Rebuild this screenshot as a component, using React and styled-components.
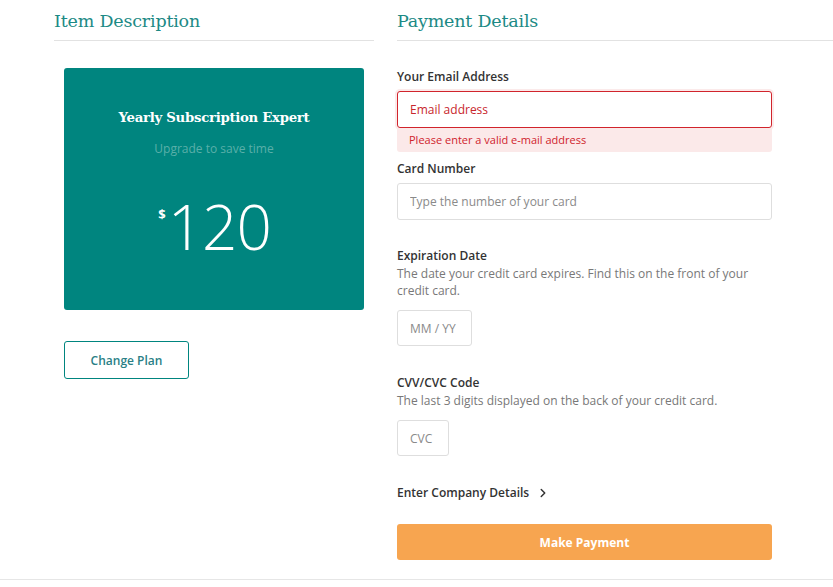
import React from 'react';
import styled, { createGlobalStyle } from 'styled-components';
import { ChevronRight } from 'lucide-react';

const GlobalStyle = createGlobalStyle`
  html, body {
    margin: 0;
    padding: 0;
    background: #fff;
  }
  * {
    box-sizing: border-box;
  }
  body {
    font-family: 'Open Sans', 'Liberation Sans', sans-serif;
    color: #333;
  }
`;

const TEAL = '#00857f';

const Page = styled.div`
  min-height: 580px;
  border-bottom: 1px solid #e6e6e6;
  padding: 0 0 0 54px;
  display: grid;
  grid-template-columns: 320px 1fr;
  column-gap: 23px;
  align-items: start;
`;

const Column = styled.section`
  display: flex;
  flex-direction: column;
`;

const SectionTitle = styled.h2`
  margin: 0;
  padding: 8px 0 7px;
  height: 41px;
  font-family: 'DejaVu Serif', 'Liberation Serif', serif;
  font-weight: normal;
  font-size: 17.5px;
  line-height: 26px;
  letter-spacing: -0.2px;
  color: #1c8a85;
  border-bottom: 1px solid #e2e2e2;
`;

const PlanCard = styled.div`
  margin: 27px 0 0 10px;
  width: 300px;
  height: 242px;
  border-radius: 3px;
  background: ${TEAL};
  display: flex;
  flex-direction: column;
  align-items: center;
  padding-top: 40px;
  color: #fff;
`;

const PlanName = styled.h3`
  margin: 0;
  font-family: 'DejaVu Serif', 'Liberation Serif', serif;
  font-weight: bold;
  font-size: 13.3px;
  line-height: 20px;
  letter-spacing: -0.3px;
`;

const PlanHint = styled.p`
  margin: 12px 0 0;
  font-size: 12px;
  line-height: 18px;
  color: #5aafa9;
`;

const Price = styled.div`
  margin-top: 37px;
  display: flex;
  align-items: flex-start;
  font-size: 62px;
  line-height: 62px;
  font-weight: 300;
  letter-spacing: -1px;
`;

const Currency = styled.span`
  font-size: 13px;
  font-weight: 700;
  line-height: 13px;
  margin: 13px 3px 0 1px;
`;

const OutlineButton = styled.button`
  margin: 31px 0 0 10px;
  width: 125px;
  height: 38px;
  border: 1px solid ${TEAL};
  border-radius: 3px;
  background: #fff;
  color: #2a7f86;
  font-family: 'Open Sans', 'Liberation Sans', sans-serif;
  font-size: 12px;
  font-weight: 600;
  cursor: pointer;
`;

const Form = styled.form`
  width: 375px;
  display: flex;
  flex-direction: column;
  padding-top: 27px;
`;

const Field = styled.div`
  display: flex;
  flex-direction: column;
  margin-bottom: ${(p) => p.$space ?? 26}px;
`;

const Label = styled.label`
  font-size: 12px;
  font-weight: 600;
  line-height: 18px;
  color: #333;
`;

const Help = styled.p`
  margin: 0;
  font-size: 12px;
  line-height: 17px;
  color: #787878;
`;

const Input = styled.input`
  margin-top: ${(p) => p.$offset ?? 5}px;
  width: ${(p) => p.$width || '100%'};
  height: ${(p) => p.$height || 36}px;
  padding: 0 12px;
  border: 1px solid ${(p) => (p.$error ? '#d1242c' : '#dedede')};
  border-radius: 3px;
  box-shadow: ${(p) => (p.$error ? '0 0 0 2px #fbeaea' : 'none')};
  font-family: 'Open Sans', 'Liberation Sans', sans-serif;
  font-size: 12px;
  color: #333;
  outline: none;
  background: #fff;

  &::placeholder {
    color: ${(p) => (p.$error ? '#c8262d' : '#8a8a8a')};
  }
`;

const ErrorNote = styled.div`
  height: 24px;
  padding: 0 12px;
  background: #fbe9e9;
  border-radius: 0 0 3px 3px;
  font-size: 11px;
  line-height: 24px;
  color: #d0232c;
`;

const Toggle = styled.button`
  align-self: flex-start;
  display: flex;
  align-items: center;
  gap: 7px;
  padding: 0;
  border: none;
  background: none;
  font-family: 'Open Sans', 'Liberation Sans', sans-serif;
  font-size: 12px;
  font-weight: 600;
  line-height: 18px;
  color: #333;
  margin-bottom: 22px;
  cursor: pointer;
`;

const PayButton = styled.button`
  height: 36px;
  border: none;
  border-radius: 3px;
  background: #f7a550;
  color: #fff;
  font-family: 'Open Sans', 'Liberation Sans', sans-serif;
  font-size: 12px;
  font-weight: 700;
  cursor: pointer;
`;

export default function App() {
  return (
    <>
      <GlobalStyle />
      <Page>
        <Column>
          <SectionTitle>Item Description</SectionTitle>
          <PlanCard>
            <PlanName>Yearly Subscription Expert</PlanName>
            <PlanHint>Upgrade to save time</PlanHint>
            <Price>
              <Currency>$</Currency>120
            </Price>
          </PlanCard>
          <OutlineButton type="button">Change Plan</OutlineButton>
        </Column>

        <Column>
          <SectionTitle>Payment Details</SectionTitle>
          <Form onSubmit={(e) => e.preventDefault()}>
            <Field $space={8}>
              <Label>Your Email Address</Label>
              <Input $error $height={37} placeholder="Email address" />
              <ErrorNote>Please enter a valid e-mail address</ErrorNote>
            </Field>
            <Field $space={27}>
              <Label>Card Number</Label>
              <Input $height={37} placeholder="Type the number of your card" />
            </Field>
            <Field $space={28}>
              <Label>Expiration Date</Label>
              <Help>
                The date your credit card expires. Find this on the front of your
                <br />
                credit card.
              </Help>
              <Input $offset={11} $width="75px" placeholder="MM / YY" />
            </Field>
            <Field $space={28}>
              <Label>CVV/CVC Code</Label>
              <Help>The last 3 digits displayed on the back of your credit card.</Help>
              <Input $offset={11} $width="52px" placeholder="CVC" />
            </Field>
            <Toggle type="button">
              Enter Company Details
              <ChevronRight size={14} strokeWidth={2.5} />
            </Toggle>
            <PayButton type="submit">Make Payment</PayButton>
          </Form>
        </Column>
      </Page>
    </>
  );
}
